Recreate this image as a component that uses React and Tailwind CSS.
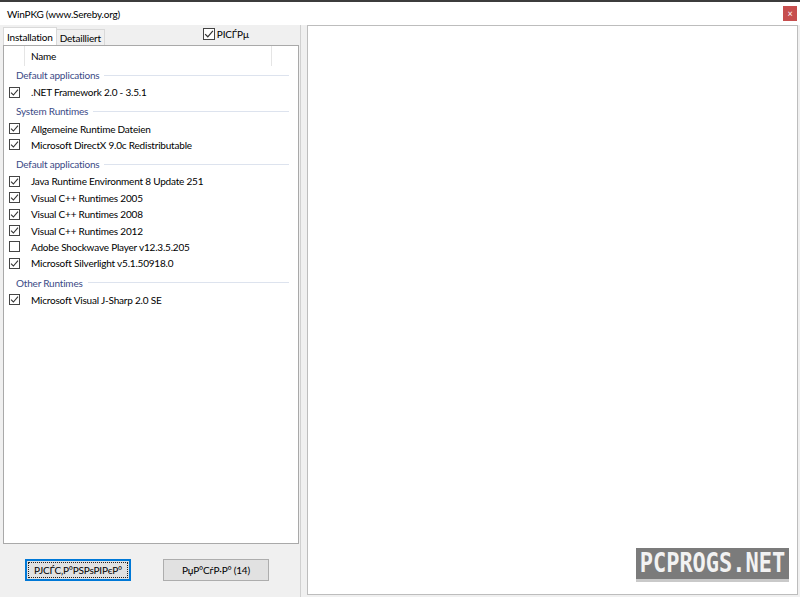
import React from "react";

const groups = [
  { title: "Default applications", items: [{ label: ".NET Framework 2.0 - 3.5.1", on: true }] },
  {
    title: "System Runtimes",
    items: [
      { label: "Allgemeine Runtime Dateien", on: true },
      { label: "Microsoft DirectX 9.0c Redistributable", on: true },
    ],
  },
  {
    title: "Default applications",
    items: [
      { label: "Java Runtime Environment 8 Update 251", on: true },
      { label: "Visual C++ Runtimes 2005", on: true },
      { label: "Visual C++ Runtimes 2008", on: true },
      { label: "Visual C++ Runtimes 2012", on: true },
      { label: "Adobe Shockwave Player v12.3.5.205", on: false },
      { label: "Microsoft Silverlight v5.1.50918.0", on: true },
    ],
  },
  { title: "Other Runtimes", items: [{ label: "Microsoft Visual J-Sharp 2.0 SE", on: true }] },
];

function Check({ on, size = 11 }) {
  return (
    <span
      className="inline-flex items-center justify-center border border-[#444] bg-white shrink-0"
      style={{ width: size, height: size }}
    >
      {on && (
        <svg width={size - 2} height={size - 2} viewBox="0 0 9 9">
          <path d="M1 4.6 L3.4 7 L8 1.6" fill="none" stroke="#333" strokeWidth="1.1" />
        </svg>
      )}
    </span>
  );
}

export default function App() {
  return (
    <div className="w-[800px] h-[597px] flex flex-col bg-[#f0f0f0] text-[10px] tracking-[-0.2px] text-black font-['Lato',sans-serif] overflow-hidden">
      <div className="h-[2px] bg-[#3c3c3c]" />
      {/* title bar */}
      <div className="h-[23px] bg-white flex items-center justify-between pl-[7px] pr-[3px]">
        <span className="leading-none">WinPKG (www.Sereby.org)</span>
        <span className="w-[14px] h-[15px] bg-[#c64e4e] flex items-center justify-center text-white text-[9px] leading-none">
          ×
        </span>
      </div>

      <div className="flex-1 flex">
        {/* left side */}
        <div className="w-[301px] flex flex-col border-r border-[#d0d0d0]">
          {/* tab strip */}
          <div className="h-[20px] flex items-end pl-[3px]">
            <div className="h-[18px] px-[3px] bg-white border border-b-0 border-[#d9d9d9] flex items-center leading-none">
              Installation
            </div>
            <div className="h-[16px] px-[3px] bg-[#f0f0f0] border border-l-0 border-b-0 border-[#d9d9d9] flex items-center leading-none">
              Detailliert
            </div>
            <div className="ml-[98px] mb-[3px] flex items-center gap-[2px] self-center">
              <Check on size={12} />
              <span className="leading-none">PICЃPµ</span>
            </div>
          </div>

          {/* list view */}
          <div className="ml-[3px] w-[296px] h-[499px] bg-white border border-[#a9a9a9] flex flex-col">
            <div className="h-[20px] flex items-center">
              <div className="w-[21px] h-full border-r border-[#e5e5e5]" />
              <span className="pl-[6px] flex-1">Name</span>
              <div className="w-[27px] h-full border-l border-[#e5e5e5]" />
            </div>
            {groups.map((g, gi) => (
              <div key={gi} className={gi === 0 ? "" : "mt-[2px]"}>
                <div className="h-[18px] flex items-center pl-[12px] pr-[9px] gap-[5px]">
                  <span className="text-[#3b4a86] leading-none">{g.title}</span>
                  <div className="flex-1 h-px bg-[#dde3ee]" />
                </div>
                {g.items.map((it, ii) => (
                  <div key={ii} className="h-[16.4px] flex items-center pl-[5px]">
                    <Check on={it.on} />
                    <span className="ml-[11px] leading-none">{it.label}</span>
                  </div>
                ))}
              </div>
            ))}
          </div>

          {/* buttons */}
          <div className="flex-1 flex items-start pt-[15px] pl-[25px] gap-[32px]">
            <button className="w-[106px] h-[22px] bg-[#e1e1e1] border-2 border-[#0078d7] flex items-center justify-center p-[1px]">
              <span className="w-full h-full border border-dotted border-[#222] flex items-center justify-center leading-none">
                PJCЃC‚P°PSPsPIPєP°
              </span>
            </button>
            <button className="w-[106px] h-[22px] bg-[#e1e1e1] border border-[#adadad] flex items-center justify-center leading-none">
              PџP°CѓP·P° (14)
            </button>
          </div>
        </div>

        {/* right pane */}
        <div className="flex-1 ml-[6px] mr-[2px] mb-[2px] bg-white border border-[#bdbdbd] flex flex-col justify-end items-end pb-[12px] pr-[8px]">
          <div className="flex flex-col">
            <div className="w-[153px] h-[31px] bg-[#7b7b7b] flex items-center justify-center">
              <span className="font-['DejaVu_Sans_Mono',monospace] font-bold text-[22px] tracking-normal text-[#f2f2f2] leading-none scale-y-[1.2]">
                PCPROGS.NET
              </span>
            </div>
            <div className="w-[153px] h-[3px] bg-[#c9c9c9]" />
          </div>
        </div>
      </div>
    </div>
  );
}
